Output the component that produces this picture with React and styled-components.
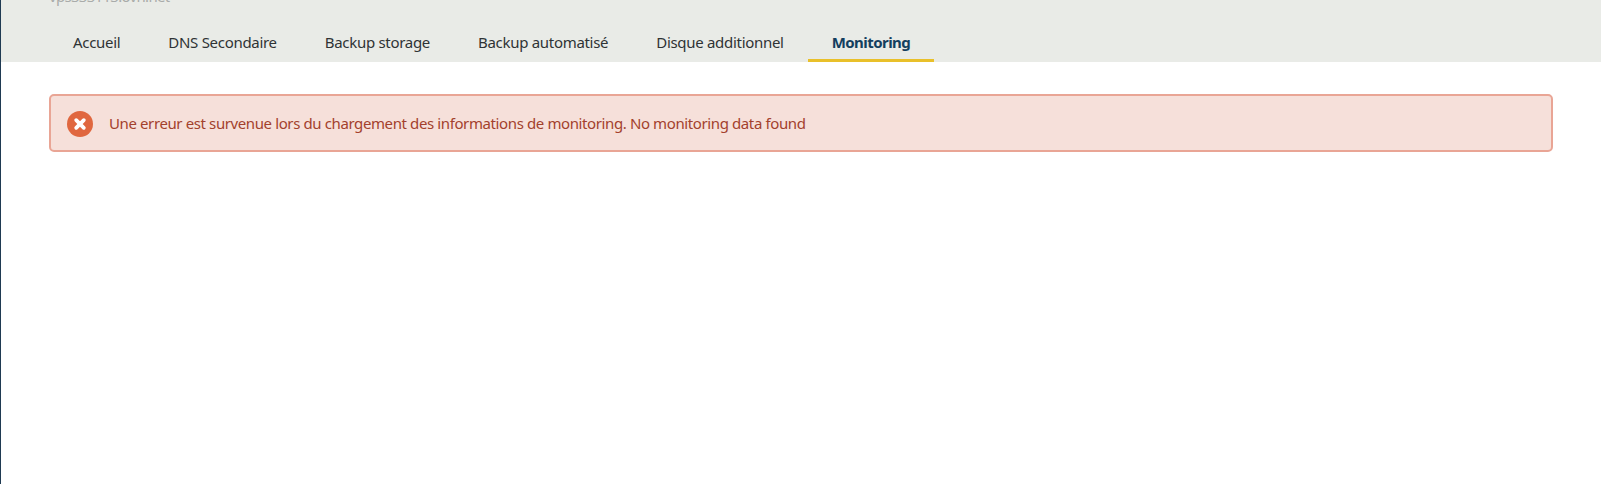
import React from 'react';
import styled, { createGlobalStyle } from 'styled-components';

const GlobalStyle = createGlobalStyle`
  html, body {
    margin: 0;
    height: 100%;
    background: #fff;
    overflow: hidden;
  }
  body {
    font-family: "Noto Sans", "Open Sans", sans-serif;
  }
`;

const Page = styled.div`
  height: 484px;
  border-left: 1px solid #1f3a52;
  box-sizing: border-box;
`;

const Header = styled.header`
  height: 62px;
  box-sizing: border-box;
  padding-left: 48px;
  background: #e9ebe7;
  display: flex;
  flex-direction: column;
  justify-content: flex-end;
`;

const HostName = styled.div`
  font-size: 15px;
  line-height: 22px;
  letter-spacing: -0.7px;
  color: #a9abaa;
  margin-bottom: 16px;
`;

const Tabs = styled.nav`
  display: flex;
`;

const Tab = styled.a`
  display: block;
  box-sizing: border-box;
  height: 39px;
  padding: 8px 24px 0;
  font-size: 15px;
  line-height: 22px;
  letter-spacing: ${(props) => (props.$active ? '-0.55px' : '-0.3px')};
  white-space: nowrap;
  color: ${(props) => (props.$active ? '#133e5e' : '#2f3335')};
  font-weight: ${(props) => (props.$active ? 700 : 400)};
  border-bottom: 3px solid ${(props) => (props.$active ? '#e9c02a' : 'transparent')};
`;

const Content = styled.main`
  padding: 32px 48px 0;
`;

const Alert = styled.div`
  display: flex;
  align-items: center;
  gap: 16px;
  box-sizing: border-box;
  width: 1504px;
  height: 58px;
  padding: 2px 16px 0 16px;
  background: #f6e0da;
  border: 2px solid #e9a595;
  border-radius: 5px;
`;

const AlertText = styled.span`
  font-size: 15px;
  line-height: 22px;
  letter-spacing: -0.39px;
  color: #a3412d;
  margin-top: -3px;
`;

const ErrorIcon = () => (
  <svg width="26" height="26" viewBox="0 0 26 26" style={{ flex: 'none' }}>
    <circle cx="13" cy="13" r="13" fill="#e0673f" />
    <path d="M9.2 9.2l7.6 7.6M16.8 9.2l-7.6 7.6" stroke="#fff" strokeWidth="3.8" strokeLinecap="round" />
  </svg>
);

const tabs = ['Accueil', 'DNS Secondaire', 'Backup storage', 'Backup automatisé', 'Disque additionnel', 'Monitoring'];

export default function App() {
  return (
    <Page>
      <GlobalStyle />
      <Header>
        <HostName>vps333113.ovh.net</HostName>
        <Tabs>
          {tabs.map((tab) => (
            <Tab key={tab} $active={tab === 'Monitoring'}>{tab}</Tab>
          ))}
        </Tabs>
      </Header>
      <Content>
        <Alert>
          <ErrorIcon />
          <AlertText>Une erreur est survenue lors du chargement des informations de monitoring. No monitoring data found</AlertText>
        </Alert>
      </Content>
    </Page>
  );
}
